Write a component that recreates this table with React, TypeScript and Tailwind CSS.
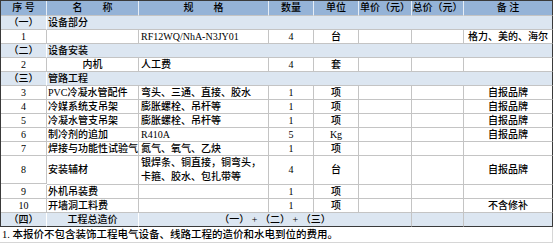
const FONT = "font-['Liberation_Serif','Noto_Sans_CJK_SC',serif]";

type Item = {
  no: string;
  name: string;
  spec: string[];
  qty: string;
  unit: string;
  note: string;
  nameCenter?: boolean;
  tall?: boolean;
};

const cell =
  "flex items-center border-r border-b border-[#c4c4c4] overflow-visible whitespace-nowrap leading-[12px]";

function Section({ no, title }: { no: string; title: string }) {
  return (
    <>
      <div className={`${cell} justify-center bg-[#dce6f1] border-r-white h-[14px]`}>{no}</div>
      <div className={`${cell} col-span-7 bg-[#dce6f1] border-r-[#3a3a3a] pl-[1px]`}>{title}</div>
    </>
  );
}

function Row({ item }: { item: Item }) {
  const h = item.tall ? "h-[28px]" : "h-[14px]";
  return (
    <>
      <div className={`${cell} ${h} justify-center`}>{item.no}</div>
      <div className={`${cell} ${item.nameCenter ? "justify-center" : "pl-[1px]"}`}>{item.name}</div>
      <div className={`${cell} flex-col !items-start justify-center pl-[2px] ${item.tall ? "!leading-[14px]" : ""}`}>
        {item.spec.map((s) => (
          <span key={s}>{s}</span>
        ))}
      </div>
      <div className={`${cell} justify-center`}>{item.qty}</div>
      <div className={`${cell} justify-center`}>{item.unit}</div>
      <div className={cell}></div>
      <div className={cell}></div>
      <div className={`${cell} justify-center border-r-[#3a3a3a]`}>{item.note}</div>
    </>
  );
}

const ITEMS3: Item[] = [
  { no: "3", name: "PVC冷凝水管配件", spec: ["弯头、三通、直接、胶水"], qty: "1", unit: "项", note: "自报品牌" },
  { no: "4", name: "冷媒系统支吊架", spec: ["膨胀螺栓、吊杆等"], qty: "1", unit: "项", note: "自报品牌" },
  { no: "5", name: "冷凝水管支吊架", spec: ["膨胀螺栓、吊杆等"], qty: "1", unit: "项", note: "自报品牌" },
  { no: "6", name: "制冷剂的追加", spec: ["R410A"], qty: "5", unit: "Kg", note: "自报品牌" },
  { no: "7", name: "焊接与功能性试验气", spec: ["氮气、氧气、乙炔"], qty: "1", unit: "项", note: "" },
  {
    no: "8",
    name: "安装辅材",
    spec: ["银焊条、铜直接，铜弯头，", "卡箍、胶水、包扎带等"],
    qty: "4",
    unit: "台",
    note: "自报品牌",
    tall: true,
  },
  { no: "9", name: "外机吊装费", spec: [""], qty: "1", unit: "项", note: "" },
  { no: "10", name: "开墙洞工料费", spec: [""], qty: "1", unit: "项", note: "不含修补" },
];

export default function App() {
  return (
    <div className={`w-[555px] h-[244px] overflow-hidden bg-white text-[10px] font-medium text-black ${FONT}`}>
      <div className="grid w-[553px] grid-cols-[46px_92px_130px_45px_45px_53px_52px_89px] border-l border-t border-[#3a3a3a]">
        {["序 号", "名　　称", "规　　格", "数量", "单位", "单价（元）", "总价（元）", "备 注"].map((h, i) => (
          <div
            key={h}
            className={`${cell} h-[15px] justify-center bg-[#95b3d7] ${i === 7 ? "border-r-[#3a3a3a]" : "border-r-[#e6edf6]"} whitespace-pre`}
          >
            {h}
          </div>
        ))}

        <Section no="（一）" title="设备部分" />
        <Row item={{ no: "1", name: "", spec: ["RF12WQ/NhA-N3JY01"], qty: "4", unit: "台", note: "格力、美的、海尔" }} />

        <Section no="（二）" title="设备安装" />
        <Row item={{ no: "2", name: "内机", spec: ["人工费"], qty: "4", unit: "套", note: "", nameCenter: true }} />

        <Section no="（三）" title="管路工程" />
        {ITEMS3.map((it) => (
          <Row key={it.no} item={it} />
        ))}

        <div className={`${cell} h-[14px] justify-center bg-[#dce6f1] border-b-[#3a3a3a] border-r-white`}>（四）</div>
        <div className={`${cell} justify-center bg-[#dce6f1] border-b-[#3a3a3a] border-r-white`}>工程总造价</div>
        <div className={`${cell} col-span-4 justify-center bg-[#dce6f1] border-b-[#3a3a3a] whitespace-pre`}>
          （一） + （二） + （三）
        </div>
        <div className={`${cell} bg-[#dce6f1] border-b-[#3a3a3a]`}></div>
        <div className={`${cell} bg-[#dce6f1] border-b-[#3a3a3a] border-r-[#3a3a3a]`}></div>
      </div>
      <div className="flex h-[16px] w-[553px] items-center border-b border-r border-[#d6d6d6] pl-[2px] text-[10.5px] leading-[12px]">
        1. 本报价不包含装饰工程电气设备、线路工程的造价和水电到位的费用。
      </div>
    </div>
  );
}
